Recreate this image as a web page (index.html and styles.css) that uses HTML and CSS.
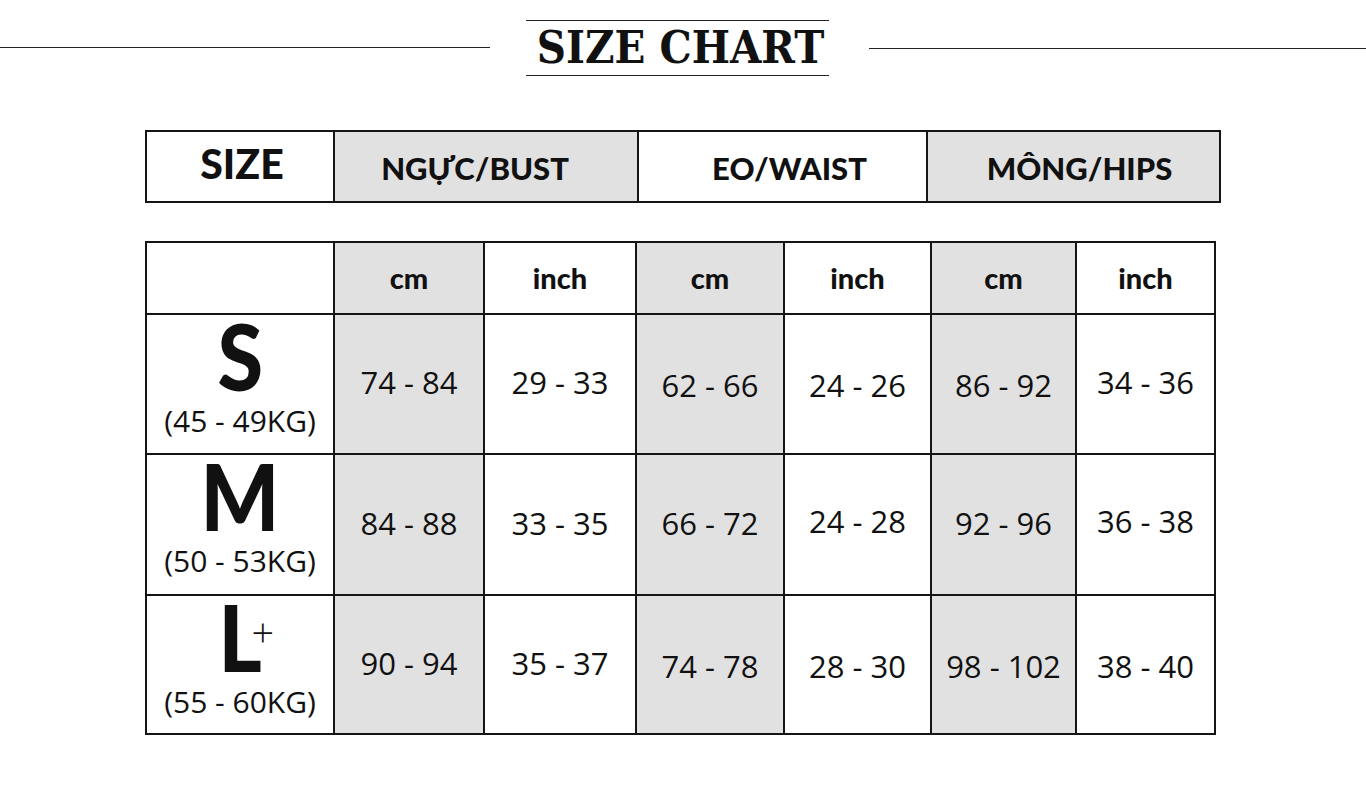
FILE: index.html
```html
<!DOCTYPE html>
<html lang="vi">
<head>
<meta charset="utf-8">
<title>Size Chart</title>
<link rel="stylesheet" href="styles.css">
</head>
<body>
<div class="page">
  <header class="title-row">
    <div class="rule rule-left"></div>
    <h1 class="title">SIZE CHART</h1>
    <div class="rule rule-right"></div>
  </header>

  <div class="head-grid">
    <div class="hcell h-size">SIZE</div>
    <div class="hcell gray h-bust">NGỰC/BUST</div>
    <div class="hcell h-waist">EO/WAIST</div>
    <div class="hcell gray h-hips">MÔNG/HIPS</div>
  </div>

  <div class="chart-grid">
    <div class="cell"></div>
    <div class="cell unit gray">cm</div>
    <div class="cell unit">inch</div>
    <div class="cell unit gray">cm</div>
    <div class="cell unit">inch</div>
    <div class="cell unit gray">cm</div>
    <div class="cell unit">inch</div>

    <div class="cell size"><span class="big">S</span><span class="kg">(45 - 49KG)</span></div>
    <div class="cell num gray">74 - 84</div>
    <div class="cell num">29 - 33</div>
    <div class="cell num gray low">62 - 66</div>
    <div class="cell num low">24 - 26</div>
    <div class="cell num gray low">86 - 92</div>
    <div class="cell num">34 - 36</div>

    <div class="cell size"><span class="big">M</span><span class="kg">(50 - 53KG)</span></div>
    <div class="cell num gray">84 - 88</div>
    <div class="cell num">33 - 35</div>
    <div class="cell num gray">66 - 72</div>
    <div class="cell num high">24 - 28</div>
    <div class="cell num gray">92 - 96</div>
    <div class="cell num high">36 - 38</div>

    <div class="cell size"><span class="big">L<sup class="plus">+</sup></span><span class="kg">(55 - 60KG)</span></div>
    <div class="cell num gray">90 - 94</div>
    <div class="cell num">35 - 37</div>
    <div class="cell num gray low">74 - 78</div>
    <div class="cell num low">28 - 30</div>
    <div class="cell num gray low">98 - 102</div>
    <div class="cell num low">38 - 40</div>
  </div>
</div>
</body>
</html>
```

FILE: styles.css
```css
* { box-sizing: border-box; }

html, body {
  margin: 0;
  padding: 0;
  background: #ffffff;
}

body {
  font-family: "Open Sans", "Noto Sans", sans-serif;
  color: #111;
}

.page {
  width: 1366px;
  padding-top: 20px;
}

.title-row {
  display: flex;
  align-items: center;
  height: 56px;
}

.rule {
  height: 1px;
  background: #222;
}

.rule-left {
  width: 490px;
  margin-top: -2px;
}

.rule-right {
  flex: 1;
}

.title {
  margin: 0 40px 0 36px;
  width: 303px;
  height: 56px;
  border-top: 1px solid #222;
  border-bottom: 1px solid #222;
  font-family: "DejaVu Serif", "Liberation Serif", serif;
  font-stretch: condensed;
  font-weight: bold;
  font-size: 45px;
  line-height: 54px;
  text-align: center;
  padding-left: 6px;
  color: #111;
}

.head-grid {
  margin: 54px 0 0 145px;
  width: 1076px;
  display: grid;
  grid-template-columns: 186px 302px 287px 291px;
  grid-template-rows: 69px;
  gap: 2px;
  padding: 2px;
  background: #151515;
}

.hcell {
  background: #fff;
  display: flex;
  align-items: center;
  justify-content: center;
  font-family: "Lato", "Open Sans", sans-serif;
  font-weight: 900;
  font-size: 31px;
  padding-top: 2px;
}

.h-size {
  font-size: 41px;
  padding-top: 0;
  padding-bottom: 6px;
  padding-left: 4px;
}

.h-bust { padding-right: 22px; }
.h-waist { padding-left: 14px; }
.h-hips { padding-left: 12px; }

.gray { background: #e1e1e1; }

.chart-grid {
  margin: 38px 0 0 145px;
  width: 1071px;
  display: grid;
  grid-template-columns: 186px 148px 150px 146px 145px 143px 137px;
  grid-template-rows: 70px 138px 139px 137px;
  gap: 2px;
  padding: 2px;
  background: #151515;
}

.cell {
  background: #fff;
  display: flex;
  align-items: center;
  justify-content: center;
}

.cell.gray { background: #e1e1e1; }

.unit {
  font-family: "Lato", "Open Sans", sans-serif;
  font-weight: 900;
  font-size: 29px;
  padding-bottom: 2px;
}

.num {
  font-size: 31px;
  font-weight: 400;
  padding-bottom: 4px;
}

.num.low { padding-bottom: 0; padding-top: 2px; }
.num.high { padding-bottom: 8px; }

.size {
  flex-direction: column;
  justify-content: flex-start;
}

.big {
  font-family: "Lato", sans-serif;
  font-weight: 900;
  font-size: 92px;
  line-height: 82px;
  position: relative;
  display: inline-block;
  transform: scaleX(0.9);
}

.plus {
  position: absolute;
  left: 80%;
  top: 16px;
  font-family: "Open Sans", sans-serif;
  font-weight: 300;
  font-size: 40px;
  line-height: 40px;
  transform: scaleX(1.1);
}

.kg {
  font-size: 30px;
  line-height: 36px;
  margin-top: 6px;
}
```
